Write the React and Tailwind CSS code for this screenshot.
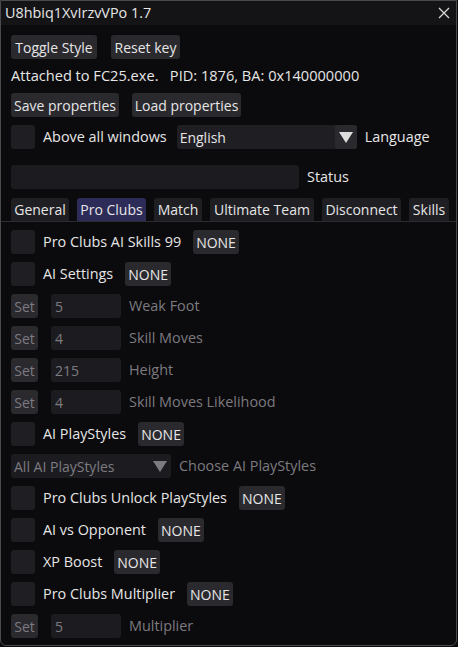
import React from 'react';

const Btn = ({ children, dim, w }) => (
  <div
    className={`h-6 px-[3px] flex items-center justify-center whitespace-nowrap rounded-[3px] bg-[#2a292e] ${w || ''} ${dim ? 'text-[#7c7b80]' : 'text-[#e6e6e6]'}`}
  >
    {children}
  </div>
);

const Check = () => <div className="w-6 h-6 rounded-[3px] bg-[#1f1e23] shrink-0" />;

const CheckRow = ({ label, none = true }) => (
  <div className="flex items-center h-6">
    <Check />
    <span className="ml-2 text-[#e6e6e6] text-[14.4px]">{label}</span>
    {none && (
      <div className="ml-3">
        <Btn>NONE</Btn>
      </div>
    )}
  </div>
);

const SetRow = ({ value, label }) => (
  <div className="flex items-center h-6">
    <Btn dim w="w-[27px]">Set</Btn>
    <div className="ml-[13px] w-[70px] h-6 rounded-[3px] bg-[#1c1b20] px-[4px] flex items-center text-[#7c7b80]">
      {value}
    </div>
    <span className="ml-2 text-[#7c7b80] text-[14.4px]">{label}</span>
  </div>
);

const Arrow = ({ className }) => (
  <svg width="14" height="12" viewBox="0 0 14 12" className={className}>
    <polygon points="0,1 14,1 7,12" fill="currentColor" />
  </svg>
);

const App = () => {
  const tabs = [
    { name: 'General', w: 'w-[58px]' },
    { name: 'Pro Clubs', w: 'w-[69px]' },
    { name: 'Match', w: 'w-[48px]' },
    { name: 'Ultimate Team', w: 'w-[104px]' },
    { name: 'Disconnect', w: 'w-[79px]' },
    { name: 'Skills', w: 'w-[40px]' },
  ];

  return (
    <div className="w-[458px] h-[647px] bg-[#0b0a0c] font-['Open_Sans',sans-serif] text-[14px] overflow-hidden">
      <div className="w-[457px] h-[646px] border border-[#4a4a4e] rounded-b-[6px] flex flex-col overflow-hidden">
        {/* Title bar */}
        <div className="h-[24px] bg-[#141416] flex items-center justify-between pl-[4px] pr-[6px] shrink-0">
          <span className="text-[#e6e6e6] text-[14.4px]">U8hbiq1XvIrzvVPo 1.7</span>
          <svg width="12" height="12" viewBox="0 0 12 12" className="text-[#d8d8d8]">
            <path d="M1 1L11 11M11 1L1 11" stroke="currentColor" strokeWidth="1.3" />
          </svg>
        </div>

        <div className="flex flex-col px-[10px] pt-[10px] gap-2">
          <div className="flex gap-[14px]">
            <Btn w="w-[86px]">Toggle Style</Btn>
            <Btn w="w-[69px]">Reset key</Btn>
          </div>

          <div className="h-[18px] flex items-center text-[#e6e6e6] text-[14.6px] whitespace-pre">
            Attached to FC25.exe.   PID: 1876, BA: 0x140000000
          </div>

          <div className="flex gap-[13px]">
            <Btn w="w-[108px]">Save properties</Btn>
            <Btn w="w-[109px]">Load properties</Btn>
          </div>

          <div className="flex items-center h-6">
            <Check />
            <span className="ml-2 text-[#e6e6e6] text-[14.4px]">Above all windows</span>
            <div className="ml-[10px] w-[180px] h-6 rounded-[3px] bg-[#1f1e23] flex items-center">
              <span className="flex-1 px-[3px] text-[#e6e6e6]">English</span>
              <div className="w-[22px] h-6 rounded-[3px] bg-[#2a292e] flex items-center justify-center">
                <Arrow className="text-[#dcdcdc]" />
              </div>
            </div>
            <span className="ml-2 text-[#e6e6e6] text-[14.4px]">Language</span>
          </div>

          <div className="flex items-center h-6 mt-2">
            <div className="w-[288px] h-6 rounded-[3px] bg-[#1c1b20]" />
            <span className="ml-2 text-[#e6e6e6] text-[14.4px]">Status</span>
          </div>

          {/* Tabs */}
          <div className="-mx-[10px] px-[10px] border-b border-[#2c2b30] flex gap-2 h-[25px] items-end">
            {tabs.map((t) => (
              <div
                key={t.name}
                className={`h-[23px] ${t.w} flex items-center justify-center whitespace-nowrap shrink-0 rounded-t-[3px] text-[#e6e6e6] ${
                  t.name === 'Pro Clubs' ? 'bg-[#2d2b57]' : 'bg-[#1f1e23]'
                }`}
              >
                {t.name}
              </div>
            ))}
          </div>

          <CheckRow label="Pro Clubs AI Skills 99" />
          <CheckRow label="AI Settings" />
          <SetRow value="5" label="Weak Foot" />
          <SetRow value="4" label="Skill Moves" />
          <SetRow value="215" label="Height" />
          <SetRow value="4" label="Skill Moves Likelihood" />
          <CheckRow label="AI PlayStyles" />

          <div className="flex items-center h-6">
            <div className="w-[160px] h-6 rounded-[3px] bg-[#1c1b20] flex items-center">
              <span className="flex-1 px-[3px] text-[#7c7b80]">All AI PlayStyles</span>
              <div className="w-[22px] h-6 flex items-center justify-center">
                <Arrow className="text-[#7c7b80]" />
              </div>
            </div>
            <span className="ml-2 text-[#7c7b80] text-[14.4px]">Choose AI PlayStyles</span>
          </div>

          <CheckRow label="Pro Clubs Unlock PlayStyles" />
          <CheckRow label="AI vs Opponent" />
          <CheckRow label="XP Boost" />
          <CheckRow label="Pro Clubs Multiplier" />
          <SetRow value="5" label="Multiplier" />
        </div>
      </div>
    </div>
  );
};

export default App;
